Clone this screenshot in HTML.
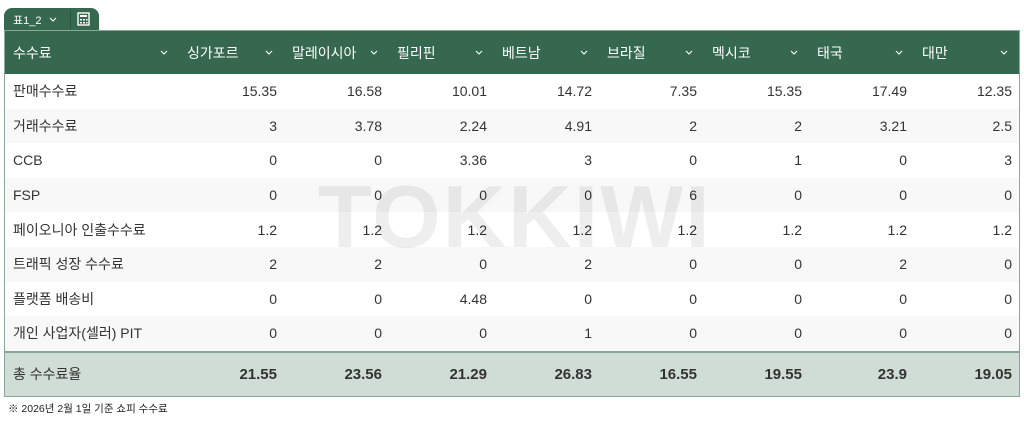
<!DOCTYPE html>
<html><head><meta charset="utf-8"><style>
body{margin:0;width:1024px;height:422px;background:#fff;font-family:"Liberation Sans","Noto Sans CJK KR",sans-serif;position:relative;overflow:hidden}
.tab{position:absolute;left:4px;top:8px;width:95px;height:22px;background:#35684f;border-radius:8px 8px 0 0;color:#fff;font-size:11px}
.tab span{position:absolute;top:4px}
.tab .sep{position:absolute;left:66px;top:2px;width:1px;height:20px;background:#2a5640}
.wrap{position:absolute;left:4px;top:30px;width:1016px;height:367px;border:1px solid #8aa697;box-sizing:border-box;overflow:hidden}
table{border-collapse:collapse;width:1014px;table-layout:fixed;position:absolute;left:0;top:0}
td,th{font-size:14px;color:#333;padding:0 8px;white-space:nowrap}
th{background:#35684f;color:#fff;font-weight:normal;text-align:left;height:43px;position:relative}
th svg{position:absolute;right:11px;top:19px}
td{height:34.6px;text-align:right;padding-right:7px}
td:first-child{text-align:left}
tr.g td{background:#f8f8f8}
tr.t td{background:#cfddd6;height:43px;font-weight:bold;font-size:15px;border-top:2px solid #8aa697;color:#333}
tr.t td:first-child{font-weight:normal;font-size:14px}
.wm{position:absolute;left:318px;top:166px;font-size:88px;font-weight:bold;color:rgba(0,0,0,0.065);letter-spacing:2px;z-index:5}
.foot{position:absolute;left:8px;top:401px;font-size:10.5px;color:#222}
</style></head><body>
<div class="tab"><span style="left:9px">표1_2</span><svg style="position:absolute;left:45px;top:9px" width="8" height="5" viewBox="0 0 8 5"><path d="M1 1L4 4L7 1" fill="none" stroke="#fff" stroke-width="1.1"/></svg><div class="sep"></div>
<svg style="position:absolute;left:73px;top:4px" width="13" height="14" viewBox="0 0 13 14"><rect x="1" y="1" width="11" height="12" fill="none" stroke="#fff" stroke-width="1.4"/><rect x="3" y="3" width="7" height="2" fill="#fff"/><g fill="#fff"><rect x="3" y="7" width="2" height="1.5"/><rect x="6" y="7" width="2" height="1.5"/><rect x="9" y="7" width="1.5" height="1.5"/><rect x="3" y="10" width="2" height="1.5"/><rect x="6" y="10" width="2" height="1.5"/><rect x="9" y="10" width="1.5" height="1.5"/></g></svg></div>
<div class="wm">TOKKIWI</div>
<div class="wrap"><table>
<colgroup><col style="width:174px"><col span="8" style="width:105px"></colgroup>
<tr><th>수수료<svg width="8" height="5" viewBox="0 0 8 5"><path d="M1 1L4 4L7 1" fill="none" stroke="#fff" stroke-width="1.1"/></svg></th><th>싱가포르<svg width="8" height="5" viewBox="0 0 8 5"><path d="M1 1L4 4L7 1" fill="none" stroke="#fff" stroke-width="1.1"/></svg></th><th>말레이시아<svg width="8" height="5" viewBox="0 0 8 5"><path d="M1 1L4 4L7 1" fill="none" stroke="#fff" stroke-width="1.1"/></svg></th><th>필리핀<svg width="8" height="5" viewBox="0 0 8 5"><path d="M1 1L4 4L7 1" fill="none" stroke="#fff" stroke-width="1.1"/></svg></th><th>베트남<svg width="8" height="5" viewBox="0 0 8 5"><path d="M1 1L4 4L7 1" fill="none" stroke="#fff" stroke-width="1.1"/></svg></th><th>브라질<svg width="8" height="5" viewBox="0 0 8 5"><path d="M1 1L4 4L7 1" fill="none" stroke="#fff" stroke-width="1.1"/></svg></th><th>멕시코<svg width="8" height="5" viewBox="0 0 8 5"><path d="M1 1L4 4L7 1" fill="none" stroke="#fff" stroke-width="1.1"/></svg></th><th>태국<svg width="8" height="5" viewBox="0 0 8 5"><path d="M1 1L4 4L7 1" fill="none" stroke="#fff" stroke-width="1.1"/></svg></th><th>대만<svg width="8" height="5" viewBox="0 0 8 5"><path d="M1 1L4 4L7 1" fill="none" stroke="#fff" stroke-width="1.1"/></svg></th></tr>
<tr><td>판매수수료</td><td>15.35</td><td>16.58</td><td>10.01</td><td>14.72</td><td>7.35</td><td>15.35</td><td>17.49</td><td>12.35</td></tr>
<tr class="g"><td>거래수수료</td><td>3</td><td>3.78</td><td>2.24</td><td>4.91</td><td>2</td><td>2</td><td>3.21</td><td>2.5</td></tr>
<tr><td>CCB</td><td>0</td><td>0</td><td>3.36</td><td>3</td><td>0</td><td>1</td><td>0</td><td>3</td></tr>
<tr class="g"><td>FSP</td><td>0</td><td>0</td><td>0</td><td>0</td><td>6</td><td>0</td><td>0</td><td>0</td></tr>
<tr><td>페이오니아 인출수수료</td><td>1.2</td><td>1.2</td><td>1.2</td><td>1.2</td><td>1.2</td><td>1.2</td><td>1.2</td><td>1.2</td></tr>
<tr class="g"><td>트래픽 성장 수수료</td><td>2</td><td>2</td><td>0</td><td>2</td><td>0</td><td>0</td><td>2</td><td>0</td></tr>
<tr><td>플랫폼 배송비</td><td>0</td><td>0</td><td>4.48</td><td>0</td><td>0</td><td>0</td><td>0</td><td>0</td></tr>
<tr class="g"><td style="height:33px">개인 사업자(셀러) PIT</td><td>0</td><td>0</td><td>0</td><td>1</td><td>0</td><td>0</td><td>0</td><td>0</td></tr>
<tr class="t"><td>총 수수료율</td><td>21.55</td><td>23.56</td><td>21.29</td><td>26.83</td><td>16.55</td><td>19.55</td><td>23.9</td><td>19.05</td></tr>
</table></div>
<div class="foot">※ 2026년 2월 1일 기준 쇼피 수수료</div>
</body></html>
